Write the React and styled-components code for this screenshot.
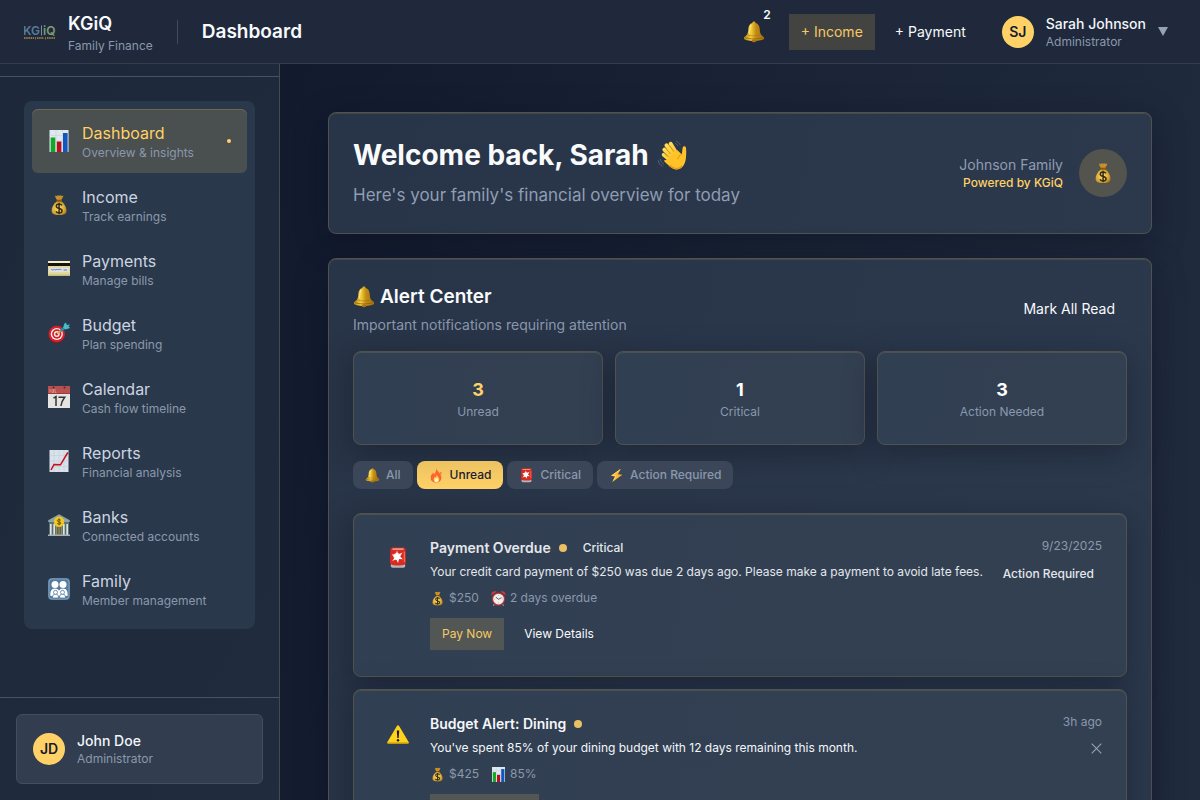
import React from "react";
import styled, { createGlobalStyle, css } from "styled-components";

const GlobalStyle = createGlobalStyle`
  *, *::before, *::after { box-sizing: border-box; }
  body {
    margin: 0;
    font-family: Inter, "Liberation Sans", sans-serif;
    font-size: 16px;
    line-height: 24px;
    color: #f8fafc;
    background: #141c2f;
    -webkit-font-smoothing: antialiased;
  }
  h1, h2, h3, p, ul { margin: 0; padding: 0; }
  ul { list-style: none; }
  button { font: inherit; color: inherit; border: 0; background: none; cursor: pointer; }
  svg { display: block; flex: none; }
`;

/* ---------- icons ---------- */

const art = {
  bell: (
    <>
      <path d="M11 .6c1 0 1.600.6 1.600 1.400 2.800.8 4 3 4.100 6 .1 3.400.8 5.400 2.100 6.600 1.400 1 2.400 1.700 2.300 2.800-.1 1.300-4.600 2.500-10.100 2.500S1 18.700.9 17.400c-.1-1.100.9-1.800 2.300-2.800 1.300-1.200 2-3.200 2.100-6.600.1-3 1.300-5.200 4.100-6 0-.8.6-1.400 1.600-1.400z" fill="url(#gBell)" />
      <path d="M8.300 4c-1.600 1.500-1.500 5.500-2.100 8.500" stroke="#fff0a0" strokeWidth="1.300" fill="none" opacity=".7" />
      <path d="M2 16.600c4 1.700 14 1.700 18 0" stroke="#8a5a08" strokeWidth="1" fill="none" opacity=".7" />
      <path d="M4.500 14c3.500 1.200 9.500 1.200 13 0" stroke="#a06d10" strokeWidth=".8" fill="none" opacity=".7" />
      <ellipse cx="11" cy="19.800" rx="2.200" ry="1.500" fill="#a87413" />
    </>
  ),
  bars: (
    <>
      <rect x="1.500" y="0" width="19" height="22" fill="#dfe7ef" />
      <path d="M1.500 5.500h19M1.500 11h19M1.500 16.500h19M8 0v22M14.500 0v22" stroke="#c2cedb" strokeWidth=".5" />
      <rect x="2.700" y="7.500" width="4.600" height="14.500" fill="#12a827" />
      <rect x="8.800" y="11.500" width="4.600" height="10.500" fill="#b9101f" />
      <rect x="15" y="3" width="4.600" height="19" fill="#0f56bd" />
    </>
  ),
  bag: (
    <>
      <path d="M7 1.500c1.300.9 2 .1 3-.3 1 .6 1.500.6 2.500 0 1 .6 1.700 1 2.900.4-.3 1.700-1.300 3.400-2.500 4.700H9.300C8 5 7.200 3.300 7 1.500z" fill="#c4912b" />
      <path d="M9 7.200h4.400c3.200 2.600 5.100 6.100 5.100 9.300 0 3.500-2 4.600-7.400 4.600s-7.500-1.100-7.500-4.600c0-3.200 2-6.700 5.400-9.300z" fill="url(#gBag)" />
      <rect x="8.400" y="5.800" width="5.600" height="1.700" rx=".8" fill="#8a5716" />
      <path d="M14 11.400c-.7-1-1.700-1.400-2.900-1.400-1.600 0-2.800.8-2.800 2.200 0 3.200 5.800 1.400 5.800 4.500 0 1.500-1.300 2.300-3 2.300-1.400 0-2.500-.5-3.200-1.600M11.100 8.700v11.500" stroke="#3a2b10" strokeWidth="1.500" fill="none" />
    </>
  ),
  card: (
    <>
      <rect x="0" y="3" width="22" height="15" rx="1" fill="#e3d9a0" />
      <rect x="0" y="3" width="22" height="2" rx="1" fill="#f4eecb" />
      <rect x="0" y="5" width="22" height="3" fill="#17130d" />
      <rect x="1.500" y="10" width="19" height="4" fill="#dfe3e6" />
      <path d="M3 12c1-1.500 1.500 1 2.500-.3s1.500.9 2.500 0 2 .5 3-.2 1.500.6 2.500 0M15.500 12h3.500" stroke="#5c78bd" strokeWidth="1" fill="none" />
      <rect x="0" y="16.500" width="22" height="1.500" rx=".7" fill="#c8bb7c" />
    </>
  ),
  target: (
    <>
      <ellipse cx="8.500" cy="13.500" rx="8" ry="7.500" fill="#9e0f16" />
      <circle cx="8.800" cy="12" r="8.200" fill="#d8202a" />
      <circle cx="8.800" cy="12" r="6.100" fill="#f5f0f0" />
      <circle cx="8.800" cy="12" r="4.700" fill="#d8202a" />
      <circle cx="8.800" cy="12" r="2.900" fill="#f5f0f0" />
      <circle cx="8.800" cy="12" r="1.500" fill="#c2141e" />
      <path d="M9 12l6-5.500" stroke="#f0a53a" strokeWidth="1.300" />
      <path d="M12.500 9l4.500-3.700" stroke="#1f8fa8" strokeWidth="2.400" />
      <path d="M15.200 5.800l1-4 1.900-1.300.7 2.400 3.200-.4-1.500 2 1.700 1.400-4.800 1.600z" fill="#45bcc9" />
    </>
  ),
  calendar: (
    <>
      <rect x="0" y="0" width="22" height="22" fill="#e4e4e2" />
      <rect x="0" y="0" width="22" height="8" fill="#b9504f" />
      <rect x="0" y="7" width="22" height="1" fill="#9a3c3d" />
      <path d="M2 3v3.500M4 3v3.500h1.500V3M7 3v3.500h1.500" stroke="#e0a3a1" strokeWidth=".7" fill="none" />
      <circle cx="5.500" cy="1.500" r="1" fill="#51282c" />
      <circle cx="16.500" cy="1.500" r="1" fill="#51282c" />
      <path d="M5.500 12.200l2.500-1.600v9.400M10.500 11.300h6.200c-2 2.500-3.200 5-3.800 8.700" stroke="#333" strokeWidth="1.500" fill="none" />
    </>
  ),
  chart: (
    <>
      <rect x="1.500" y="0" width="19" height="22" fill="#d9e2ea" />
      <path d="M1.500 5.500h19M1.500 11h19M1.500 16.500h19M6 0v22M11 0v22M16 0v22" stroke="#bccad7" strokeWidth=".5" />
      <path d="M3 20l3-5.500 6.500.3L19.800 2.500" stroke="#c8101c" strokeWidth="1.500" fill="none" />
    </>
  ),
  bank: (
    <>
      <path d="M11 .3l10.800 6V8H.200V6.300z" fill="#8ea3a3" />
      <rect x="1" y="8" width="20" height="2" fill="#5f7475" />
      <rect x="1" y="10" width="20" height="11" fill="#5b6b6e" />
      <path d="M2.800 10v11M6.200 10v11M15.800 10v11M19.200 10v11" stroke="#dce4e4" strokeWidth="1.700" />
      <rect x="8" y="12" width="6" height="9" fill="#3d5f78" />
      <path d="M8.700 12v9M13.300 12v9M11 13v8" stroke="#c79d2e" strokeWidth=".9" />
      <rect x="0" y="20.500" width="22" height="1.500" fill="#a5b2b2" />
      <circle cx="11" cy="7.800" r="5.200" fill="#f0c81e" />
      <path d="M12.700 6.300c-.8-1.200-3.300-.9-3.300.4 0 1.600 3.400.8 3.400 2.400 0 1.300-2.700 1.600-3.600.2M11.100 4.500v6.700" stroke="#6e5105" strokeWidth="1" fill="none" />
    </>
  ),
  family: (
    <>
      <rect width="22" height="22" rx="4" fill="#557b9e" />
      <rect x="1" y="1" width="20" height="20" rx="3" fill="none" stroke="#88a8c2" strokeWidth=".8" />
      <g fill="#fff">
        <circle cx="7" cy="6.500" r="3.500" />
        <circle cx="15" cy="6.500" r="3.500" />
        <path d="M2.500 18c-.6-4.500.9-7.500 4.500-7.500 2 0 3 .7 4 2 1-1.300 2-2 4-2 3.600 0 5.100 3 4.500 7.500z" />
      </g>
      <g fill="#fff" stroke="#557b9e" strokeWidth=".8">
        <path d="M4.500 20c0-3 .9-4 3-4s3 1 3 4zM11.500 20c0-3 .9-4 3-4s3 1 3 4z" />
        <circle cx="7.500" cy="14.300" r="2" />
        <circle cx="14.500" cy="14.300" r="2" />
      </g>
    </>
  ),
  siren: (
    <>
      <rect x="3.700" y="16.500" width="14.600" height="4.300" rx="2" fill="#b8b8ba" />
      <path d="M5.500.5h11c1.500 0 2 1 2.100 2.500L19 15c0 2.300-1.400 3.500-8 3.500S3 17.300 3 15l.4-12C3.500 1.500 4 .5 5.500.5z" fill="#d92b22" />
      <path d="M6 1.300h10c1 0 1 1.700 0 1.700H6c-1 0-1-1.700 0-1.700z" fill="#f0948a" />
      <circle cx="10" cy="9.500" r="3.400" fill="#ffd5cd" />
      <path d="M10 3.500l1.300 4L15.500 5.500 13 9.500l3 2.700-4.100-.3-.8 4-1.900-3.600-4 1.600 2.500-3.500L4.700 7.500l4.100.1z" fill="#fff" />
      <path d="M17.300 4.500v10.500" stroke="#f77a67" strokeWidth="1" />
    </>
  ),
  warning: (
    <>
      <path d="M11 2.200c.5 0 .8.3 1.100.8l9.500 16c.5.900.2 1.500-.8 1.500H1.200c-1 0-1.300-.6-.8-1.500l9.500-16c.3-.5.6-.8 1.100-.8z" fill="#ffd21e" />
      <path d="M.4 19.300h21.200c.2.800-.1 1.200-.8 1.200H1.200c-.7 0-1-.4-.8-1.200z" fill="#e0a800" />
      <path d="M9.800 7.500h2.400l-.5 7.500h-1.400z" fill="#1d1a12" />
      <circle cx="11" cy="17.200" r="1.200" fill="#1d1a12" />
    </>
  ),
  fire: (
    <>
      <path d="M10.500.5c1.300 4.700 7.700 7.500 7.700 13.500 0 4.300-3.200 7.500-7.200 7.500S3.600 18.500 3.600 14.200C3.600 11 5 9.500 5.500 6.500c1.300.8 1.800 1.800 2 3.200C9.300 7.500 10.700 4.500 10.500.5z" fill="#ff6430" />
      <path d="M4.500 9.500c-2 4-1.500 8.500 1.500 10.700M17.500 6c-.5 1.300-.3 2 .4 3.300" stroke="#f04a24" strokeWidth="1.300" fill="none" />
      <path d="M11 9.500c.8 2.500 4 4 4 7.300 0 2.700-1.900 4.500-4.100 4.500s-4-1.700-4-4.300c0-2 1.100-2.800 1.500-4.500 1 .7 1.200 1.200 1.400 2.100.8-1.400 1.300-3 1.200-5.100z" fill="#ffd35a" />
      <ellipse cx="11" cy="18" rx="2.300" ry="3" fill="#fff6d8" />
    </>
  ),
  zap: (
    <>
      <path d="M17.500 1L2.500 11.500l6.300.8L4.500 21 19.500 10l-6.400-.9z" fill="#ffb62e" />
      <path d="M16 2.500L5 10.800l5.200.6L7 18" stroke="#ffe48a" strokeWidth="1" fill="none" />
    </>
  ),
  alarm: (
    <>
      <path d="M5 19.500L3.300 21.600M17 19.500l1.700 2.100" stroke="#9a9a9c" strokeWidth="1.700" />
      <path d="M.5 6.300C-.1 2.500 4-.9 8 1zM21.500 6.300C22.100 2.500 18-.9 14 1z" fill="#d33b3b" />
      <circle cx="11" cy="11.800" r="9.500" fill="#c93434" />
      <circle cx="11" cy="11.800" r="7.900" fill="#f1efec" />
      <path d="M11 12.200L7 9M11 12.200l4.500-2.500" stroke="#333" strokeWidth="1.100" />
      <path d="M11 5.500v1.200M11 17v1.200M4.800 11.800H6M16 11.800h1.200" stroke="#777" strokeWidth=".8" />
    </>
  ),
  wave: (
    <>
      <g stroke="url(#gHand)" strokeLinecap="round" fill="none">
        <path d="M10.800 12.500L5.200 6.800" strokeWidth="2.800" />
        <path d="M12 10.800L6.700 3.700" strokeWidth="2.800" />
        <path d="M14 9.800L9.700 2.700" strokeWidth="2.800" />
        <path d="M9.500 14.500L4.700 10.500" strokeWidth="2.600" />
      </g>
      <path d="M8 13.300l6.300-6.200 3.200 3.100c.6-1.800.3-3.500.8-5 .4-1.200 2.200-.9 2.300.5.200 2.400.2 4.500-.1 7.300-.5 4.800-3 7.600-6 7.900-2.800.2-5-1.300-9.700-6.200z" fill="#ffc327" />
      <path d="M17.500 10.200c-1.700.8-2.500 1.800-2.700 3.400M7.500 12l-2.600-2.700M9.600 10L6.300 6M12 8.300L9 4" stroke="#d18a0c" strokeWidth=".6" fill="none" />
      <path d="M9 18c3 2.800 6.500 3.200 9 .3" stroke="#e89b18" strokeWidth="1" fill="none" />
      <path d="M13.500.8c1.500.5 2.500 1.400 3 2.900M12.700 2.300c1 .4 1.700 1 2 2M2.300 13.500c.3 1.800 1.200 3 2.700 3.700M.8 14.300c.4 2.200 1.500 3.700 3.300 4.400" stroke="#58677b" strokeWidth=".6" fill="none" />
    </>
  ),
};

const Emoji = ({ name, size = 22 }) => (
  <svg width={size} height={size} viewBox="0 0 22 22" aria-hidden="true">{art[name]}</svg>
);

const Gradients = () => (
  <svg width="0" height="0" aria-hidden="true">
    <defs>
      <linearGradient id="gBell" x1="0" x2="1">
        <stop offset="0" stopColor="#b98412" />
        <stop offset=".35" stopColor="#f5cf3e" />
        <stop offset=".6" stopColor="#c08a14" />
        <stop offset="1" stopColor="#a8740e" />
      </linearGradient>
      <radialGradient id="gBag" cx=".45" cy=".5" r=".6">
        <stop offset="0" stopColor="#f8df7c" />
        <stop offset=".65" stopColor="#dcae3a" />
        <stop offset="1" stopColor="#a97720" />
      </radialGradient>
      <linearGradient id="gHand" x1="0" y1="0" x2="1" y2="1">
        <stop offset="0" stopColor="#ffdc55" />
        <stop offset="1" stopColor="#ffc327" />
      </linearGradient>
    </defs>
  </svg>
);

const Logo = () => (
  <svg width="32" height="32" viewBox="0 0 32 32" role="img" aria-label="KGiQ logo">
    <g fontFamily="Inter, sans-serif" fontSize="12" fontWeight="600">
      <text x="-1" y="19" fill="#567d9c">KG</text>
      <text x="19" y="19" fill="#7c9d72">iQ</text>
    </g>
    <path d="M17.500 9.500v10" stroke="#7e8ea0" strokeWidth="1" />
    <path d="M0 22h10M13 22h7M23 22h8" stroke="#b08f48" strokeWidth="1.500" strokeDasharray="1.500 .7" />
    <path d="M11.500 21v2.500M21.500 21v2.500" stroke="#b08f48" strokeWidth=".7" />
  </svg>
);

/* ---------- shared parts ---------- */

const Small = styled.span`
  display: block;
  font-size: 12px;
  line-height: 16px;
  color: ${(p) => (p.$gold ? "#ffd166" : "#8a98ad")};
  font-weight: ${(p) => (p.$gold ? 500 : 400)};
`;

const Name = styled.span`
  display: block;
  font-size: 14px;
  line-height: 20px;
  font-weight: ${(p) => (p.$muted ? 400 : 500)};
  color: ${(p) => (p.$muted ? "#8f9db2" : "#f1f5f9")};
`;

const Avatar = styled.span`
  display: flex;
  align-items: center;
  justify-content: center;
  flex: none;
  width: ${(p) => (p.$large ? 48 : 32)}px;
  height: ${(p) => (p.$large ? 48 : 32)}px;
  border-radius: 50%;
  background: ${(p) => (p.$large ? "#54544f" : "#ffd166")};
  color: #141b2d;
  font-size: 14px;
  font-weight: 600;
`;

const Button = styled.button`
  height: ${(p) => (p.$small ? 32 : 36)}px;
  padding: 0 12px;
  font-size: ${(p) => (p.$small ? 12 : 14)}px;
  line-height: 20px;
  color: ${(p) => (p.$primary ? "#f5c964" : "#f8fafc")};
  background: ${(p) => (p.$primary ? "rgba(255, 209, 102, 0.16)" : "transparent")};
  white-space: nowrap;
`;

const Panel = styled.section`
  border: 1px solid #50524f;
  border-radius: 8px;
  padding: 24px;
  background: linear-gradient(100deg, #283447, #2c394d);
  box-shadow: 0 8px 32px rgba(8, 12, 26, 0.35), inset 0 1px 0 rgba(255, 209, 102, 0.12);
`;

/* ---------- header ---------- */

const Page = styled.div`
  display: flex;
  flex-direction: column;
  height: 100vh;
  overflow: hidden;
`;

const Header = styled.header`
  display: flex;
  align-items: center;
  justify-content: space-between;
  flex: none;
  height: 64px;
  padding: 0 24px;
  border-bottom: 1px solid #333d4a;
  background: #1f293b;
`;

const Brand = styled.div`
  display: flex;
  align-items: center;
  gap: 12px;
`;

const BrandName = styled.span`
  display: block;
  font-size: 18px;
  line-height: 28px;
  font-weight: 600;
`;

const HeaderSide = styled.div`
  display: flex;
  align-items: center;
  gap: ${(p) => p.$gap}px;
`;

const Divider = styled.span`
  width: 1px;
  height: 24px;
  background: #3f4a5c;
`;

const PageTitle = styled.h1`
  font-size: 19px;
  line-height: 28px;
  font-weight: 600;
`;

const BellButton = styled.button`
  position: relative;
  padding: 8px;
`;

const BellCount = styled.span`
  position: absolute;
  top: -6px;
  right: 2px;
  font-size: 12px;
  line-height: 16px;
  font-weight: 600;
`;

const UserButton = styled.button`
  display: flex;
  align-items: center;
  gap: 12px;
  padding: 8px;
  text-align: left;
`;

const Caret = styled.span`
  width: 0;
  border: 5px solid transparent;
  border-top: 9px solid #94a3b8;
  border-bottom: 0;
`;

/* ---------- sidebar ---------- */

const Body = styled.div`
  display: flex;
  flex: 1;
  min-height: 0;
`;

const Sidebar = styled.aside`
  display: flex;
  flex-direction: column;
  flex: none;
  width: 280px;
  padding-top: 12px;
  border-right: 1px solid #454a50;
  background: linear-gradient(120deg, #1d283b, #202b3e);
`;

const NavArea = styled.nav`
  flex: 1;
  padding: 24px;
  border-top: 1px solid #475264;
`;

const NavList = styled.ul`
  padding: 8px;
  border-radius: 8px;
  background: #2a384b;
`;

const NavLink = styled.a`
  display: flex;
  align-items: center;
  gap: 12px;
  padding: 12px 16px;
  border-radius: 6px;
  color: #cbd5e1;
  text-decoration: none;
  ${(p) =>
    p.$active &&
    css`
      color: #ffd166;
      background: #4a4f4f;
      box-shadow: inset 0 1px 0 #716750;
    `}
`;

const NavText = styled.span`
  flex: 1;
  font-size: 16px;
  line-height: 24px;
`;

const ActiveDot = styled.span`
  width: 4px;
  height: 4px;
  border-radius: 50%;
  background: #ffd166;
`;

const SidebarFooter = styled.div`
  padding: 16px;
  border-top: 1px solid #475264;
`;

const ProfileCard = styled.div`
  display: flex;
  align-items: center;
  gap: 12px;
  padding: 16px;
  border: 1px solid #434f60;
  border-radius: 6px;
  background: #323e4f;
`;

/* ---------- main ---------- */

const Main = styled.main`
  display: flex;
  flex-direction: column;
  flex: 1;
  gap: 24px;
  padding: 48px;
  min-width: 0;
  overflow-y: auto;
  scrollbar-width: none;
  background: linear-gradient(100deg, #121a2e, #1a2436 50%, #202b3e);
  > * { flex: none; }
`;

const Spread = styled.div`
  display: flex;
  align-items: center;
  justify-content: space-between;
`;

const Welcome = styled.h2`
  display: flex;
  align-items: center;
  gap: 8px;
  font-size: 28px;
  line-height: 36px;
  font-weight: 700;
`;

const WelcomeText = styled.p`
  margin-top: 8px;
  font-size: 17px;
  line-height: 28px;
  color: #8f9db2;
`;

const FamilyLabel = styled.div`
  text-align: right;
`;

const SectionTitle = styled.h2`
  display: flex;
  align-items: center;
  gap: 5px;
  font-size: 19px;
  line-height: 28px;
  font-weight: 600;
`;

const SectionText = styled.p`
  margin-top: 4px;
  font-size: 14px;
  line-height: 20px;
  color: #8a98ad;
`;

const Stats = styled.div`
  display: grid;
  grid-template-columns: repeat(3, 1fr);
  gap: 12px;
  margin: 16px 0;
`;

const Inner = styled(Panel)`
  background: linear-gradient(100deg, #313f52, #334052);
`;

const Stat = styled(Inner)`
  text-align: center;
`;

const StatValue = styled.div`
  font-size: 18px;
  line-height: 28px;
  font-weight: 700;
  color: ${(p) => (p.$gold ? "#ffd166" : "#fff")};
`;

const Filters = styled.div`
  position: relative;
  display: flex;
  gap: 4px;
  margin-bottom: 24px;
`;

const Filter = styled.button`
  display: flex;
  align-items: center;
  gap: 6px;
  padding: 6px 12px;
  border-radius: 8px;
  font-size: 12px;
  line-height: 16px;
  font-weight: 500;
  color: ${(p) => (p.$active ? "#1a2032" : "#8a98ad")};
  background: ${(p) => (p.$active ? "linear-gradient(#ecc262, #ffd166)" : "#3b4758")};
`;

const AlertList = styled.div`
  display: flex;
  flex-direction: column;
  gap: 12px;
`;

const Alert = styled(Inner)`
  display: flex;
  color: ${(p) => (p.$read ? "#e3e7ec" : "#f4f7fa")};
`;

const AlertIcon = styled.div`
  display: flex;
  align-items: center;
  justify-content: center;
  flex: none;
  width: 40px;
  height: 40px;
  margin-right: 12px;
`;

const AlertContent = styled.div`
  flex: 1;
  min-width: 0;
`;

const AlertHead = styled.div`
  display: flex;
  align-items: center;
  gap: 8px;
  height: 20px;
`;

const AlertTitle = styled.h3`
  font-size: 14px;
  line-height: 20px;
  font-weight: 600;
`;

const Dot = styled.span`
  width: 8px;
  height: 8px;
  border-radius: 50%;
  background: #ebc063;
`;

const Tag = styled.span`
  padding: 4px 8px;
  font-size: 12px;
  line-height: 16px;
  font-weight: 500;
  white-space: nowrap;
`;

const AlertText = styled.p`
  margin-top: 4px;
  font-size: 12px;
  line-height: 20px;
`;

const Meta = styled.div`
  display: flex;
  gap: 12px;
  margin: 8px 0 12px;
`;

const MetaItem = styled(Small)`
  display: flex;
  align-items: center;
  gap: 4px;
`;

const Actions = styled.div`
  display: flex;
  align-items: flex-start;
  gap: 8px;
  min-height: 34px;
`;

const AlertSide = styled.div`
  display: flex;
  flex-direction: column;
  align-items: flex-end;
  flex: none;
  gap: 8px;
  margin-left: 8px;
`;

const Dismiss = styled.button`
  padding: 5px 0;
  color: #94a3b8;
`;

const nav = [
  ["bars", "Dashboard", "Overview & insights"],
  ["bag", "Income", "Track earnings"],
  ["card", "Payments", "Manage bills"],
  ["target", "Budget", "Plan spending"],
  ["calendar", "Calendar", "Cash flow timeline"],
  ["chart", "Reports", "Financial analysis"],
  ["bank", "Banks", "Connected accounts"],
  ["family", "Family", "Member management"],
];

const filters = [
  ["bell", "All"],
  ["fire", "Unread"],
  ["siren", "Critical"],
  ["zap", "Action Required"],
];

export default function App() {
  return (
    <Page>
      <GlobalStyle />
      <Header>
        <HeaderSide $gap={24}>
          <Brand>
            <Logo />
            <div>
              <BrandName>KGiQ</BrandName>
              <Small>Family Finance</Small>
            </div>
          </Brand>
          <Divider />
          <PageTitle>Dashboard</PageTitle>
        </HeaderSide>
        <HeaderSide $gap={16}>
          <BellButton aria-label="Notifications">
            <Emoji name="bell" />
            <BellCount>2</BellCount>
          </BellButton>
          <HeaderSide $gap={8}>
            <Button $primary>+ Income</Button>
            <Button>+ Payment</Button>
          </HeaderSide>
          <UserButton>
            <Avatar>SJ</Avatar>
            <span>
              <Name>Sarah Johnson</Name>
              <Small>Administrator</Small>
            </span>
            <Caret />
          </UserButton>
        </HeaderSide>
      </Header>

      <Body>
        <Sidebar>
          <NavArea aria-label="Main">
            <NavList>
              {nav.map(([icon, label, note], i) => (
                <li key={label}>
                  <NavLink href={`#${label.toLowerCase()}`} $active={i === 0}>
                    <Emoji name={icon} />
                    <NavText>
                      {label}
                      <Small>{note}</Small>
                    </NavText>
                    {i === 0 && <ActiveDot />}
                  </NavLink>
                </li>
              ))}
            </NavList>
          </NavArea>
          <SidebarFooter>
            <ProfileCard>
              <Avatar>JD</Avatar>
              <div>
                <Name>John Doe</Name>
                <Small>Administrator</Small>
              </div>
            </ProfileCard>
          </SidebarFooter>
        </Sidebar>

        <Main>
          <Panel>
            <Spread>
              <div>
                <Welcome>Welcome back, Sarah <Emoji name="wave" size={31} /></Welcome>
                <WelcomeText>Here's your family's financial overview for today</WelcomeText>
              </div>
              <HeaderSide $gap={16}>
                <FamilyLabel>
                  <Name $muted>Johnson Family</Name>
                  <Small $gold>Powered by KGiQ</Small>
                </FamilyLabel>
                <Avatar $large><Emoji name="bag" /></Avatar>
              </HeaderSide>
            </Spread>
          </Panel>

          <Panel>
            <Spread>
              <div>
                <SectionTitle><Emoji name="bell" /> Alert Center</SectionTitle>
                <SectionText>Important notifications requiring attention</SectionText>
              </div>
              <Button>Mark All Read</Button>
            </Spread>
            <Stats>
              <Stat><StatValue $gold>3</StatValue><Small>Unread</Small></Stat>
              <Stat><StatValue>1</StatValue><Small>Critical</Small></Stat>
              <Stat><StatValue>3</StatValue><Small>Action Needed</Small></Stat>
            </Stats>
            <Filters>
              {filters.map(([icon, label]) => (
                <Filter key={label} $active={label === "Unread"}>
                  <Emoji name={icon} size={15} />
                  {label}
                </Filter>
              ))}
            </Filters>
            <AlertList>
              <Alert $read>
                <AlertIcon><Emoji name="siren" /></AlertIcon>
                <AlertContent>
                  <AlertHead>
                    <AlertTitle>Payment Overdue</AlertTitle>
                    <Dot />
                    <Tag>Critical</Tag>
                  </AlertHead>
                  <AlertText>Your credit card payment of $250 was due 2 days ago. Please make a payment to avoid late fees.</AlertText>
                  <Meta>
                    <MetaItem><Emoji name="bag" size={15} />$250</MetaItem>
                    <MetaItem><Emoji name="alarm" size={15} />2 days overdue</MetaItem>
                  </Meta>
                  <Actions>
                    <Button $small $primary>Pay Now</Button>
                    <Button $small>View Details</Button>
                  </Actions>
                </AlertContent>
                <AlertSide>
                  <Small>9/23/2025</Small>
                  <Tag>Action Required</Tag>
                </AlertSide>
              </Alert>
              <Alert>
                <AlertIcon><Emoji name="warning" /></AlertIcon>
                <AlertContent>
                  <AlertHead>
                    <AlertTitle>Budget Alert: Dining</AlertTitle>
                    <Dot />
                  </AlertHead>
                  <AlertText>You've spent 85% of your dining budget with 12 days remaining this month.</AlertText>
                  <Meta>
                    <MetaItem><Emoji name="bag" size={15} />$425</MetaItem>
                    <MetaItem><Emoji name="bars" size={15} />85%</MetaItem>
                  </Meta>
                  <Actions>
                    <Button $small $primary>Review Budget</Button>
                  </Actions>
                </AlertContent>
                <AlertSide>
                  <Small>3h ago</Small>
                  <Dismiss aria-label="Dismiss">
                    <svg width="11" height="11" viewBox="0 0 11 11">
                      <path d="M.7.700l9.600 9.600M10.300.700L.7 10.300" stroke="currentColor" strokeWidth="1.100" />
                    </svg>
                  </Dismiss>
                </AlertSide>
              </Alert>
            </AlertList>
          </Panel>
        </Main>
      </Body>
      <Gradients />
    </Page>
  );
}
